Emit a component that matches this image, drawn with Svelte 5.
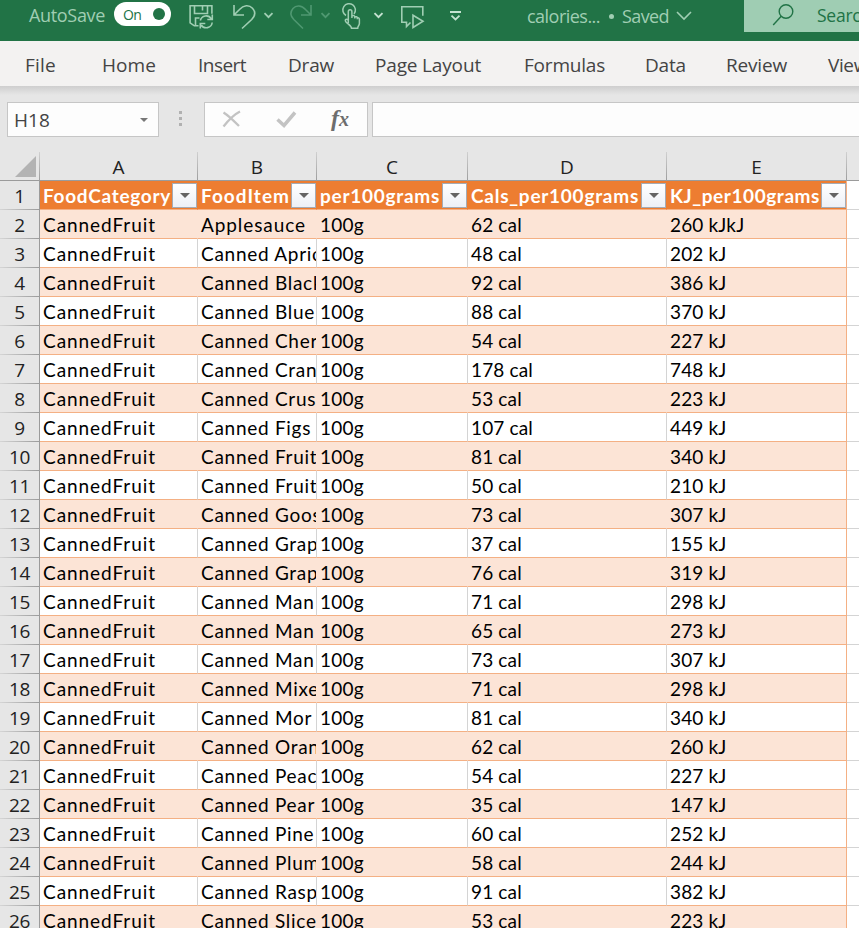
<script>
  // Spreads letters evenly so that a label fills the given width.
  function fit(node, width) {
    if (!width) return;
    node.style.letterSpacing = '0px';
    const natural = node.getBoundingClientRect().width;
    const n = node.textContent.length;
    node.style.letterSpacing = `${(width - natural) / n}px`;
  }

  const tabs = [
    ['File', 25, 31], ['Home', 102, 54], ['Insert', 198, 48], ['Draw', 288, 46],
    ['Page Layout', 375, 106], ['Formulas', 524, 81], ['Data', 645, 41],
    ['Review', 726, 61], ['View', 828, 40]
  ].map(([label, x, width], i, all) => ({
    label, width, gap: i ? x - all[i - 1][1] - all[i - 1][2] : x
  }));

  const columns = [
    { letter: 'A', title: 'FoodCategory', width: 128 },
    { letter: 'B', title: 'FoodItem', width: 89 },
    { letter: 'C', title: 'per100grams', width: 120 },
    { letter: 'D', title: 'Cals_per100grams', width: 168 },
    { letter: 'E', title: 'KJ_per100grams', width: 150 }
  ];

  const rows = [
    ['Applesauce', 62, '260 kJkJ', 105], ['Canned Apric', 48, 202], ['Canned Black', 92, 386],
    ['Canned Blue', 88, 370], ['Canned Cher', 54, 227], ['Canned Cran', 178, 748],
    ['Canned Crus', 53, 223], ['Canned Figs', 107, 449], ['Canned Fruit', 81, 340],
    ['Canned Fruit', 50, 210], ['Canned Goos', 73, 307], ['Canned Grap', 37, 155],
    ['Canned Grap', 76, 319], ['Canned Man', 71, 298], ['Canned Man', 65, 273],
    ['Canned Man', 73, 307], ['Canned Mixe', 71, 298], ['Canned Mor', 81, 340],
    ['Canned Oran', 62, 260], ['Canned Peac', 54, 227], ['Canned Pear', 35, 147],
    ['Canned Pine', 60, 252], ['Canned Plum', 58, 244], ['Canned Rasp', 91, 382],
    ['Canned Slice', 53, 223]
  ];
</script>

<main>
  <header>
    <span class="autosave" use:fit={76}>AutoSave</span>
    <span class="toggle"><span use:fit={18}>On</span><i></i></span>
    <svg class="tools" width="290" height="41" viewBox="180 0 290 41" fill="none" stroke="#a0ceb3" stroke-width="1.6">
      <path d="M198.5 25.8h-4.2l-4.2-3V5.8h21.8v8M194.5 6v7.5h13V6M202.5 6v4.5M195.5 26v-8h4" />
      <path d="M200.3 20.5a6 6 0 0 1 11-1.7M212.3 14.5v5h-5M212.2 22.5a6 6 0 0 1-11 2.5M200.3 28.5v-5h5" />
      <path d="M234 5v10h10M234.5 14.5l5-5c4-4.5 9.5-5 13-1.2 3.5 3.7 2.5 7.7-.8 11.2L242 28.5" />
      <path d="M264.5 13.2l4 4 4-4" stroke-width="1.8" />
      <g stroke="#4f9871">
        <path d="M311 5v10h-10M310.5 14.5l-5-5c-4-4.5-9.5-4.5-12.5-1-3.3 3.8-2.4 7.7.8 11L303 28.5" />
        <path d="M321.5 13.2l4 4 4-4" stroke-width="1.8" />
      </g>
      <path d="M346 15.5a6.3 6.3 0 1 1 8-1.5M348.3 23V11.8c0-2.8 3.6-2.8 3.6 0V18M352 16c1.5-1 2.8-.3 2.8 1v1.5M354.8 17c1.5-.8 2.5-.1 2.5 1v1.2M357.2 18c1.5-.5 2.2.2 2.2 1.5v4c0 2-1.7 2.5-1.7 4.7h-6.2c0-2.3-3.5-4-5.9-6.8-1-1.8.8-3 2.7-1.1" stroke-width="1.5" />
      <path d="M374.5 13.2l4 4 4-4" stroke-width="1.9" stroke="#c5e2d1" />
      <path d="M410.5 22.5l-4 4v-4.3h-4.7V6.8h21v9M413 15.2v12.3l10-6.2z" />
      <path d="M450 12h11M451.5 15.7l4 3.7 4-3.7" stroke-width="1.8" stroke="#c5e2d1" />
    </svg>
    <span class="doc" use:fit={73}>calories...</span>
    <i class="dot"></i>
    <span class="saved" use:fit={47}>Saved</span>
    <svg class="down" width="16" height="41" viewBox="0 0 16 41" fill="none" stroke="#a0ceb3" stroke-width="1.6"><path d="M1 12l7 7 7-7" /></svg>
    <div class="search">
      <svg width="24" height="32" viewBox="0 0 24 32" fill="none" stroke="#217346" stroke-width="1.4"><circle cx="14" cy="11.5" r="6.8" /><path d="M9.2 16.3L1.2 25" /></svg>
      <span use:fit={54}>Search</span>
    </div>
  </header>

  <nav>
    {#each tabs as tab}
      <span class="tab" style="margin-left: {tab.gap}px; width: {tab.width}px"><span use:fit={tab.width}>{tab.label}</span></span>
    {/each}
  </nav>

  <section class="bar">
    <div class="name"><span use:fit={36}>H18</span><i></i></div>
    <div class="grip"><i></i><i></i><i></i></div>
    <div class="tools-box">
      <svg width="162" height="33" viewBox="205 103 162 33" fill="none">
        <path d="M223.5 112.5c5 3 10 8 15.5 13.5M240 111.5c-6 3-11 8-16.5 15" stroke="#c3c3c3" stroke-width="2.3" />
        <path d="M277.5 119.5l6.5 6 11-13" stroke="#c3c3c3" stroke-width="3.5" />
      </svg>
      <span class="fx">f<small>x</small></span>
    </div>
    <div class="formula"></div>
  </section>

  <div class="sheet">
    <div class="letters">
      <div class="corner"><svg width="21" height="21"><path d="M21 0v21H0z" fill="#b3b3b3" /></svg></div>
      {#each columns as column}<div class="letter">{column.letter}</div>{/each}
      <div></div>
    </div>
    <div class="row titles">
      <div class="num">1</div>
      {#each columns as column}
        <div class="cell"><b use:fit={column.width}>{column.title}</b><button aria-label="Filter"><i></i></button></div>
      {/each}
      <div class="rest"></div>
    </div>
    {#each rows as [item, cal, kj, itemWidth], i}
      <div class="row" class:tint={i % 2 === 0}>
        <div class="num">{i + 2}</div>
        <div class="cell"><span use:fit={113}>CannedFruit</span></div>
        <div class="cell item"><span use:fit={itemWidth}>{item}</span></div>
        <div class="cell"><span use:fit={44}>100g</span></div>
        <div class="cell"><span>{cal} cal</span></div>
        <div class="cell"><span>{typeof kj === 'string' ? kj : `${kj} kJ`}</span></div>
        <div class="rest"></div>
      </div>
    {/each}
  </div>
</main>

<style>
  :global(body) { margin: 0; overflow: hidden; }
  main { width: 859px; height: 928px; overflow: hidden; background: #fff; font-family: "Open Sans", sans-serif; }
  main span, main b { white-space: pre; }
  header { height: 41px; background: #217346; color: #a0ceb3; display: flex; font-size: 18px; line-height: 30px; }
  .autosave { margin-left: 29px; }
  .toggle { box-sizing: border-box; margin: 2px 0 0 9px; width: 57px; height: 24px; border-radius: 12px; background: #fff; color: #217346; font-size: 14px; line-height: 25px; padding: 0 6px 0 9px; display: flex; justify-content: space-between; align-items: center; }
  .toggle i { width: 12px; height: 12px; border-radius: 50%; background: #217346; }
  .tools { margin-left: 9px; }
  .doc, .saved { line-height: 33px; }
  .doc { margin-left: 57px; }
  .dot { width: 5px; height: 5px; border-radius: 50%; background: #a0ceb3; margin: 14px 0 0 9px; }
  .saved { margin-left: 8px; }
  .down { margin-left: 7px; }
  .search { margin-left: auto; width: 115px; height: 32px; flex: none; background: #9fcdb3; color: #217346; display: flex; overflow: hidden; }
  .search svg { margin-left: 28px; flex: none; }
  .search span { margin-left: 21px; font-size: 17.5px; line-height: 31px; flex: none; }
  nav { height: 45px; background: #f3f2f1; color: #444; display: flex; font-size: 19px; line-height: 48px; overflow: hidden; }
  .tab { flex: none; }
  .bar { height: 66px; box-sizing: border-box; padding: 16px 0 0 7px; background: linear-gradient(#cecece, #e6e6e6 9px); display: flex; }
  .bar > div { box-sizing: border-box; height: 35px; }
  .name, .tools-box, .formula { background: #fdfdfd; border: 1px solid #c6c6c6; }
  .name { width: 152px; display: flex; align-items: center; justify-content: space-between; padding: 0 10px 0 6px; color: #444; font-size: 19px; }
  .name i { border: 4px solid transparent; border-top-color: #777; border-bottom: 0; }
  .grip { width: 4px; margin: 0 21px 0 20px; padding-top: 9px; display: flex; flex-direction: column; gap: 3px; }
  .grip i { width: 3px; height: 3px; background: #b1b1b1; }
  .tools-box { width: 164px; position: relative; }
  .fx { position: absolute; left: 126px; top: 1px; font: italic bold 24px/28px "Liberation Serif", serif; color: #6d6d6d; }
  .fx small { font-size: 20px; }
  .formula { flex: 1; margin-left: 4px; border-right: 0; }
  .letters, .row { display: grid; grid-template-columns: 40px 158px 119px 151px 199px 180px 1fr; }
  .letters { height: 29px; box-sizing: border-box; background: #e6e6e6; border-bottom: 1px solid #9b9b9b; }
  .letters > div { background: linear-gradient(#d0d0d0, #999) right / 1px 100% no-repeat; }
  .letters > div:last-child { background: none; }
  .corner { padding: 4px 0 0 15px; box-sizing: border-box; }
  .letter { box-sizing: border-box; padding-right: 1px; font-size: 19px; line-height: 31px; text-align: center; color: #222; }
  .row { height: 29px; }
  .row > div { box-sizing: border-box; height: 29px; min-width: 0; }
  .num { background: linear-gradient(90deg, #d5d5d5, #9b9b9b) bottom / 100% 1px no-repeat #e6e6e6; border-right: 1px solid #9b9b9b; text-align: center; font-size: 19px; letter-spacing: -0.3px; line-height: 30px; color: #222; }
  .cell { overflow: hidden; border-right: 1px solid #d4d4d4; border-bottom: 1px solid #f4b084; padding-left: 3px; font: 19px/30px Lato, sans-serif; letter-spacing: 0.15px; color: #000; }
  .item { letter-spacing: 0.72px; }
  .tint .cell { background: #fce4d6; border-right-color: #fce4d6; }
  .row .cell:nth-child(6) { border-right-color: #f4b084; }
  .rest { border-bottom: 1px solid #d4d4d4; }
  .titles .cell { background: #ed7d31; color: #fff; display: flex; justify-content: space-between; border-right-color: #ed7d31; }
  .titles b { font-size: 19px; flex: none; }
  button { box-sizing: border-box; width: 25px; height: 25px; margin: 2px 0 0; flex: none; padding: 0; border: 1px solid #a4abb5; background: linear-gradient(#fff, #edf0f6); display: flex; align-items: center; justify-content: center; }
  button i { border: 5px solid transparent; border-top-color: #646464; border-bottom: 0; }
</style>
